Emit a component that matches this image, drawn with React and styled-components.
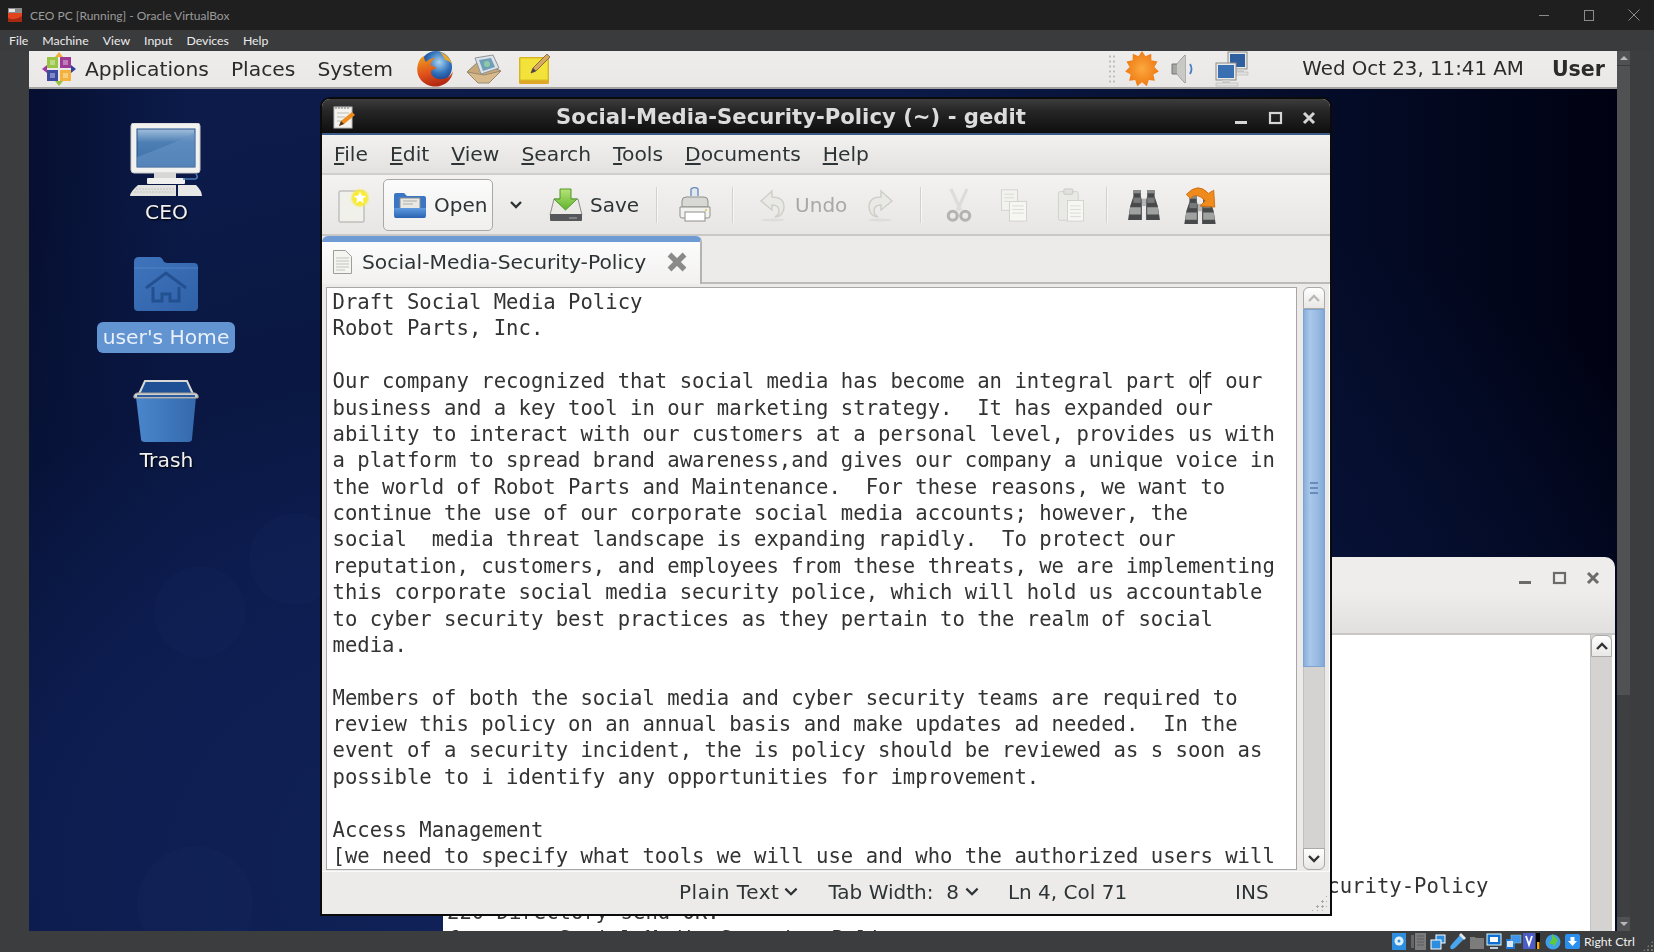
import React from 'react';
import styled, { createGlobalStyle } from 'styled-components';

const Global = createGlobalStyle`
  html, body { margin: 0; padding: 0; background: #3c3d3f; overflow: hidden; }
  * { box-sizing: border-box; }
`;

const ui = `"DejaVu Sans", sans-serif`;
const host = `Lato, "Open Sans", sans-serif`;
const mono = `"DejaVu Sans Mono", monospace`;

const Screen = styled.div`
  width: 1654px; height: 952px; display: flex; flex-direction: column; overflow: hidden;
  background: #3c3d3f;
`;
const HostTitle = styled.div`
  height: 30px; background: #1f1f1f; display: flex; align-items: center; padding-left: 7px;
  font: 12px ${host}; color: #9b9b9b; position: relative;
`;
const HostTitleText = styled.span` margin-left: 7px; `;
const HostControls = styled.div`
  margin-left: auto; display: flex; align-items: center; gap: 31px; padding-right: 13px; color: #8b8b8b;
`;
const HostMenu = styled.div`
  height: 21px; background: #3a3b3d; display: flex; align-items: center; gap: 14px; padding-left: 9px;
  font: 12.3px ${host}; color: #ececec;
`;
const Middle = styled.div` height: 880px; display: flex; `;
const Gutter = styled.div` width: 29px; background: #3c3d3f; flex: none; `;
const Guest = styled.div`
  width: 1588px; flex: none; display: flex; flex-direction: column; filter: blur(0.45px); overflow: hidden;
`;
const HostScroll = styled.div`
  width: 13px; flex: none; display: flex; flex-direction: column; background: #3e3f41;
`;
const HostScrollBtn = styled.div`
  height: 14px; background: #505153; display: flex; align-items: center; justify-content: center; flex: none;
  &::after {
    content: ''; border-left: 4px solid transparent; border-right: 4px solid transparent;
    ${p => p.$down ? 'border-top: 4px solid #b9b9b9;' : 'border-bottom: 4px solid #b9b9b9;'}
  }
`;
const HostThumb = styled.div` height: 630px; background: #505153; border-top: 1px solid #3a3a3a; flex: none; `;
const HostTrack = styled.div` flex: 1; `;
const HostStatus = styled.div`
  height: 21px; background: #3c3d3f; display: flex; align-items: center; justify-content: flex-end;
  font: 12.3px ${host}; color: #f0f0f0; padding-right: 19px; position: relative;
`;
const StatusIcon = styled.span` margin-left: ${p => p.$ml || 0}px; display: flex; `;
const RightCtrl = styled.span` margin-left: 4px; `;
const Panel = styled.div`
  height: 38px; background: linear-gradient(#eeedec, #e9e8e7); border-bottom: 2px solid #a4a3a1;
  display: flex; align-items: center; font: 20.3px ${ui}; color: #2b2b2b; flex: none; padding-bottom: 1px;
`;
const PanelSlot = styled.span`
  margin-left: ${p => p.$ml || 0}px; display: flex; white-space: nowrap;
  ${p => p.$bold && 'font-weight: bold;'}
  ${p => p.$fs && `font-size: ${p.$fs}px;`}
`;
const PanelDots = styled.span`
  margin-left: auto; width: 8px; height: 30px;
  background-image: radial-gradient(circle, #bbb 1px, transparent 1.2px); background-size: 4px 5px;
`;
const Desktop = styled.div`
  flex: 1; position: relative; overflow: hidden;
  background:
    radial-gradient(circle 46px at 266px 470px, rgba(40,60,120,.08), rgba(40,60,120,.08) 98%, transparent),
    radial-gradient(circle 46px at 171px 523px, rgba(40,60,120,.07), rgba(40,60,120,.07) 98%, transparent),
    radial-gradient(circle 58px at 166px 815px, rgba(40,60,120,.08), rgba(40,60,120,.08) 98%, transparent),
    radial-gradient(ellipse 1300px 760px at 38% 92%, #12245c 0%, #0d1d50 45%, rgba(8,20,60,0.6) 70%, rgba(0,3,20,0) 100%),
    linear-gradient(90deg, #060f30 0%, #0c1b4a 10%, #0b1a48 55%, #000212 100%);
`;
const IconColumn = styled.div`
  width: 274px; padding-top: 34px; display: flex; flex-direction: column; align-items: center;
`;
const DeskItem = styled.div`
  height: ${p => p.$h}px; display: flex; flex-direction: column; align-items: center; flex: none;
`;
const DeskLabel = styled.div`
  font: 20.3px/24px ${ui}; color: #f1f1f1; text-shadow: 1px 1px 2px #000; margin-top: ${p => p.$mt || 0}px;
  margin-left: 1px; white-space: nowrap;
`;
const DeskPill = styled(DeskLabel)`
  background: #6394d2; border-radius: 6px; padding: 3px 6px 4px; text-shadow: none; color: #e9f0fa; height: 31px;
  margin-left: 0;
`;

const BackWin = styled.div`
  position: absolute; left: 414px; top: 468px; width: 1172px; height: 420px;
  border-radius: 0 10px 0 0; overflow: hidden; display: flex; flex-direction: column;
`;
const BackHead = styled.div`
  height: 78px; flex: none; background: linear-gradient(#eeedec 45%, #e1e0df); border-bottom: 2px solid #c8c7c5;
  display: flex; justify-content: flex-end; gap: 1px; padding: 11px 6px 0 0;
`;
const WinBtn = styled.span` width: 33px; height: 20px; display: flex; align-items: center; justify-content: center; `;
const BackBody = styled.div` flex: 1; display: flex; background: #fff; padding-right: 3px; `;
const BackText = styled.pre`
  flex: 1; margin: 0; padding: 238px 0 0 4px; font: 20.6px/26.37px ${mono}; color: #333;
`;
const BackScroll = styled.div` width: 22px; background: #d4d3d1; border-left: 1px solid #c4c3c1; flex: none; `;
const ScrollBtn = styled.div`
  height: 22px; background: linear-gradient(#fff, #e8e7e6); border: 1px solid #aaa9a7;
  border-radius: ${p => p.$down ? '0 0 6px 6px' : '6px 6px 0 0'};
  display: flex; align-items: center; justify-content: center; flex: none;
`;

const Gedit = styled.div`
  position: absolute; left: 291px; top: 8px; width: 1012px; height: 819px;
  border: 2px solid #0b0b0b; border-radius: 10px 10px 0 0; background: #ecebea;
  display: flex; flex-direction: column; overflow: hidden;
`;
const GTitle = styled.div`
  height: 36px; flex: none; position: relative; display: flex; align-items: center; justify-content: center;
  background: linear-gradient(#3d3d3d, #262626 35%, #0e0e0e); border-bottom: 2px solid #3a5a88;
  font: bold 21.2px ${ui}; color: #dcdcdc; padding-right: 70px;
`;
const GTitleIcon = styled.span` position: absolute; left: 9px; top: 5px; display: flex; `;
const GTitleBtns = styled.span` position: absolute; right: 5px; top: 9px; display: flex; gap: 1px; `;
const GMenu = styled.div`
  height: 40px; flex: none; display: flex; align-items: center; gap: 22px; padding: 0 0 0 12px;
  background: linear-gradient(#f2f1f0, #e3e2e1); border-bottom: 2px solid #cfcecc;
  font: 20.3px ${ui}; color: #2e3436;
`;
const Toolbar = styled.div`
  height: 61px; flex: none; display: flex; align-items: center;
  background: linear-gradient(#f3f2f1, #e7e6e5); border-bottom: 2px solid #c9c8c6;
  font: 20px ${ui}; color: #2e3436;
`;
const Tool = styled.span`
  margin-left: ${p => p.$ml || 0}px; display: flex; align-items: center; flex: none; white-space: nowrap;
  color: ${p => p.$off ? '#a9a8a6' : 'inherit'};
`;
const ToolSep = styled.span`
  margin-left: ${p => p.$ml}px; width: 2px; height: 36px; background: #d2d1cf; flex: none; border-right: 1px solid #f6f6f6;
`;
const OpenBtn = styled.span`
  margin-left: ${p => p.$ml}px; width: 110px; height: 52px; border: 1px solid #a9a8a6; border-radius: 5px;
  background: linear-gradient(#fbfbfb, #f0efee); display: flex; align-items: center; gap: 7px; padding-left: 9px; flex: none;
`;
const Tabs = styled.div`
  height: 48px; flex: none; display: flex; align-items: flex-end; position: relative;
  border-bottom: 2px solid #bcbbb9;
`;
const Tab = styled.div`
  width: 380px; height: 48px; margin-bottom: -2px; background: linear-gradient(#fcfcfc, #f2f1f0);
  border-top: 6px solid #6f9bd4; border-right: 2px solid #b4b3b1; border-radius: 6px 6px 0 0;
  display: flex; align-items: center; padding: 0 0 2px 10px; font: 20.3px ${ui}; color: #2e3436; position: relative; z-index: 1;
`;
const TabLabel = styled.span` margin-left: 9px; white-space: nowrap; `;
const TabClose = styled.span` margin-left: 19px; display: flex; `;
const EditFrame = styled.div`
  height: 587px; flex: none; display: flex; padding: 3px 2px 1px 4px; border-right: 1px solid #fff;
`;
const TextView = styled.div`
  flex: 1; background: #fff; border: 1px solid #a8a7a5; overflow: hidden; padding: 1px 0 0 5.5px;
`;
const Code = styled.pre`
  margin: 0; font: 20.6px/26.37px ${mono}; color: #333;
`;
const Caret = styled.span`
  display: inline-block; width: 0; height: 24px; border-left: 1px solid #111; margin-right: -1px; vertical-align: -6px;
`;
const VScroll = styled.div`
  width: 22px; margin: 0 2px 0 6px; flex: none; display: flex; flex-direction: column; background: #d4d3d1;
  border-radius: 6px;
`;
const VThumb = styled.div`
  height: 358px; flex: none; background: linear-gradient(90deg, #89aedb, #a9c7ea 30%, #97b9e2 70%, #84a9d8);
  border: 1px solid #7fa3d1; display: flex; align-items: center; justify-content: center; flex-direction: column; gap: 3px;
`;
const Grip = styled.i` display: block; width: 8px; height: 2px; background: #6a8bb5; `;
const VTrack = styled.div` flex: 1; border-left: 1px solid #c2c1bf; border-right: 1px solid #c2c1bf; `;
const StatusBar = styled.div`
  flex: 1; display: flex; align-items: center; font: 20px ${ui}; color: #2e3436; position: relative;
  border-top: 1px solid #fafafa; padding-bottom: 3px;
`;
const StatusItem = styled.span`
  margin-left: ${p => p.$ml}px; display: flex; align-items: center; white-space: nowrap;
  ${p => p.$wide && 'letter-spacing: .55px;'}
`;
const ResizeGrip = styled.span`
  position: absolute; right: 3px; bottom: 3px; width: 17px; height: 17px;
  background-image: radial-gradient(circle, #aaa 1px, transparent 1.2px); background-size: 5px 5px;
  clip-path: polygon(100% 0, 100% 100%, 0 100%);
`;
const HostGrip = styled.span`
  position: absolute; right: 0; bottom: 0; width: 12px; height: 12px;
  background-image: radial-gradient(circle, #777 1px, transparent 1.2px); background-size: 4px 4px;
  clip-path: polygon(100% 0, 100% 100%, 0 100%);
`;

const Chevron = ({ s = 16, c = '#2e3436', w = 2.4, up }) => (
  <svg width={s} height={s} viewBox="0 0 16 16">
    <path d={up ? 'M3 11l5-5 5 5' : 'M3 5l5 5 5-5'} fill="none" stroke={c} strokeWidth={w} />
  </svg>
);
const MinI = ({ c }) => <svg width="16" height="16" viewBox="0 0 16 16"><rect x="2" y="11" width="12" height="3" fill={c} /></svg>;
const MaxI = ({ c }) => <svg width="16" height="16" viewBox="0 0 16 16"><rect x="3" y="3" width="11" height="10" fill="none" stroke={c} strokeWidth="2.2" /></svg>;
const CloseI = ({ c, s = 16, w = 3 }) => <svg width={s} height={s} viewBox="0 0 16 16"><path d="M3 3l10 10M13 3L3 13" stroke={c} strokeWidth={w} /></svg>;

const VBoxIcon = () => (
  <svg width="16" height="16" viewBox="0 0 16 16">
    <rect x="1" y="1" width="14" height="5" fill="#8a8a8a" /><rect x="2" y="2" width="6" height="3" fill="#e8e8e8" /><path d="M1 6h14v5q-6 5-14 1z" fill="#e2451e" /><path d="M1 11q7 3 14-2v6H1z" fill="#a62a12" />
  </svg>
);
const CentOS = () => (
  <svg width="34" height="34" viewBox="0 0 34 34">
    <path d="M17 0l4 5h-8z" fill="#f2a93b" /><path d="M0 17l5-4v8z" fill="#a03a9e" /><path d="M34 17l-5-4v8z" fill="#2e3f9e" /><path d="M17 34l4-5h-8z" fill="#98c23c" />
    <rect x="5" y="5" width="11" height="11" fill="#9ac544" /><rect x="18" y="5" width="11" height="11" fill="#9c3a96" />
    <rect x="5" y="18" width="11" height="11" fill="#3c4aa0" /><rect x="18" y="18" width="11" height="11" fill="#f4b23c" />
    <path d="M8 8h5v5H8zM21 8h5v5h-5zM8 21h5v5H8zM21 21h5v5h-5z" fill="#fff" opacity=".35" />
  </svg>
);
const Firefox = () => (
  <svg width="38" height="38" viewBox="0 0 38 38">
    <defs>
      <radialGradient id="ffb" cx=".6" cy=".35" r=".6"><stop offset="0" stopColor="#a8d4f2" /><stop offset=".6" stopColor="#2f6fb8" /><stop offset="1" stopColor="#1c3f88" /></radialGradient>
      <linearGradient id="ffo" x1="0" y1="0" x2=".3" y2="1"><stop offset="0" stopColor="#f0a020" /><stop offset=".6" stopColor="#e0521a" /><stop offset="1" stopColor="#b32a14" /></linearGradient>
    </defs>
    <circle cx="20" cy="17" r="16" fill="url(#ffb)" />
    <path d="M5 8c-4 5-5 13-2 19 4 8 14 11 21 9 7-2 12-7 13-15-2 5-6 8-11 8-6 1-11-3-11-7 0-2 2-3 5-3 0-2-3-4-5-3-1-3 1-6 5-8-5 0-8 2-10 4C9 11 8 9 8 6 6 7 5 8 5 8z" fill="url(#ffo)" />
    <path d="M24 2c6 2 10 6 12 12-3-3-5-4-7-4-1-3-3-6-5-8z" fill="#e8a830" />
  </svg>
);
const Envelope = () => (
  <svg width="36" height="30" viewBox="0 0 36 30">
    <path d="M1 18L13 7l22 10-12 12z" fill="#c9a878" stroke="#8a8172" />
    <path d="M9 4l18-3 6 13-18 6z" fill="#dde3e8" stroke="#8e9499" />
    <path d="M13 6l12-2 4 9-12 4z" fill="#6fa0b8" /><circle cx="21" cy="10" r="3" fill="#8ec8a8" />
    <path d="M1 18l17 3 17-4-12 12H12z" fill="#d7b98c" stroke="#9a8a70" />
  </svg>
);
const Note = () => (
  <svg width="36" height="34" viewBox="0 0 36 34">
    <rect x="2" y="5" width="30" height="27" rx="1.5" fill="#e0a628" />
    <rect x="3" y="6" width="28" height="22" fill="#f3e23a" stroke="#d4c020" />
    <path d="M14 21l2-5L30 2l3 3-14 14z" fill="#d9a860" stroke="#6d5a3a" strokeWidth=".8" /><path d="M14 21l2-5 3 3z" fill="#444" />
  </svg>
);
const star = (n, R, r, c) => Array.from({ length: n * 2 }, (_, i) => {
  const a = (i * Math.PI) / n - Math.PI / 2; const q = i % 2 ? r : R;
  return `${(c + q * Math.cos(a)).toFixed(1)},${(c + q * Math.sin(a)).toFixed(1)}`;
}).join(' ');
const Burst = () => (
  <svg width="34" height="36" viewBox="0 0 34 34" preserveAspectRatio="none">
    <defs><radialGradient id="bst"><stop offset="0" stopColor="#fba93e" /><stop offset="1" stopColor="#ef7a14" /></radialGradient></defs>
    <polygon points={star(11, 17, 12.5, 17)} fill="url(#bst)" />
  </svg>
);
const Speaker = () => (
  <svg width="26" height="34" viewBox="0 0 26 34">
    <path d="M1 12h5l8-9v28l-8-9H1z" fill="#a6a6a3" stroke="#777" /><path d="M6 12l8-9v28l-8-9z" fill="#c8c8c5" />
    <path d="M19 12q3 5 0 10" fill="none" stroke="#4a7fc4" strokeWidth="1.8" />
  </svg>
);
const Network = () => (
  <svg width="34" height="36" viewBox="0 0 34 36">
    <rect x="13" y="1" width="19" height="17" fill="#e8e8e6" stroke="#8c8c8a" /><rect x="15" y="3" width="15" height="13" fill="#2f5f9f" />
    <rect x="21" y="18" width="8" height="3" fill="#cfcfcd" /><rect x="17" y="21" width="16" height="3" fill="#e2e2e0" stroke="#aaa" strokeWidth=".5" />
    <rect x="1" y="12" width="20" height="17" fill="#e8e8e6" stroke="#8c8c8a" /><rect x="3" y="14" width="16" height="13" fill="#3a6fb2" />
    <rect x="7" y="29" width="8" height="3" fill="#cfcfcd" /><rect x="1" y="32" width="22" height="3" fill="#e2e2e0" stroke="#aaa" strokeWidth=".5" />
  </svg>
);
const GeditIcon = () => (
  <svg width="26" height="26" viewBox="0 0 26 26">
    <rect x="3" y="3" width="18" height="21" fill="#f3f2ec" stroke="#bbb" />
    <path d="M5 2v3M8 2v3M11 2v3M14 2v3M17 2v3" stroke="#888" strokeWidth="1.2" />
    <path d="M6 9h12M6 13h8M6 17h6" stroke="#bbb" />
    <path d="M8 22l2-5 11-9 3 3-11 9z" fill="#ee8c1e" /><path d="M8 22l2-5 3 3z" fill="#4a3a2a" />
  </svg>
);
const NewDoc = () => (
  <svg width="32" height="36" viewBox="0 0 32 36">
    <defs><radialGradient id="nd"><stop offset="0" stopColor="#fff200" /><stop offset=".7" stopColor="#f6ea40" /><stop offset="1" stopColor="#f6ea40" stopOpacity="0" /></radialGradient></defs>
    <rect x="2" y="4" width="25" height="31" rx="1" fill="#f1f1ec" stroke="#a8a8a4" />
    <circle cx="23" cy="11" r="10" fill="url(#nd)" />
    <polygon points={star(5, 6.5, 3, 11).split(' ').map(p => { const [x, y] = p.split(','); return `${+x + 12},${y}`; }).join(' ')} fill="#fff" />
  </svg>
);
const FolderOpen = () => (
  <svg width="34" height="28" viewBox="0 0 34 28">
    <defs><linearGradient id="fo" x1="0" y1="0" x2="0" y2="1"><stop offset="0" stopColor="#5f9be0" /><stop offset="1" stopColor="#2a62b0" /></linearGradient></defs>
    <path d="M1 4q0-2 2-2h8l3 3h17q2 0 2 2v18q0 2-2 2H3q-2 0-2-2z" fill="#3a76c4" />
    <rect x="7" y="7" width="20" height="11" fill="#e8e8e4" stroke="#8b8b88" /><path d="M10 10h14M10 13h10" stroke="#aaa" />
    <path d="M1 17h32l-1 9q0 1-2 1H4q-2 0-2-1z" fill="url(#fo)" />
  </svg>
);
const SaveI = () => (
  <svg width="34" height="34" viewBox="0 0 34 34">
    <defs><linearGradient id="sg" x1="0" y1="0" x2="0" y2="1"><stop offset="0" stopColor="#b9e27a" /><stop offset="1" stopColor="#5fb52c" /></linearGradient></defs>
    <path d="M5 11h24l4 16H1z" fill="#eceae6" stroke="#8c8c88" />
    <rect x="1" y="26" width="32" height="7" rx="1" fill="#55575a" /><path d="M20 30h8" stroke="#aaa" />
    <path d="M11 1h11v10h6L16.500 22 5 11h6z" fill="url(#sg)" stroke="#4f9a25" />
  </svg>
);
const Printer = () => (
  <svg width="34" height="36" viewBox="0 0 34 36">
    <path d="M13 9V2q4-3 7 0v7" fill="#dfe7f1" stroke="#6f8fb8" strokeWidth="1.4" />
    <path d="M4 14q0-4 4-4h18q4 0 4 4v6H4z" fill="#d8d8d4" stroke="#8f8f8c" />
    <path d="M2 20h30v9q0 2-2 2H4q-2 0-2-2z" fill="#f1f1ee" stroke="#8f8f8c" />
    <rect x="7" y="25" width="20" height="9" fill="#fff" stroke="#8f8f8c" /><circle cx="28" cy="23" r="1" fill="#d8c04a" />
  </svg>
);
const ArrowI = ({ flip }) => (
  <svg width="32" height="34" viewBox="0 0 32 34" style={flip ? { transform: 'scaleX(-1)' } : undefined}>
    <path d="M16 3L5 13l11 9v-5c5 0 7 2 7 6 0 3-2 5-4 6 5 0 9-4 9-10 0-7-5-10-12-10z" fill="#e9e9e5" stroke="#cfcfca" strokeWidth="1.5" />
    <ellipse cx="17" cy="32" rx="12" ry="1.500" fill="#ddd" />
  </svg>
);
const Scissors = () => (
  <svg width="30" height="34" viewBox="0 0 32 38">
    <path d="M7 1l11 24M25 1L14 25" stroke="#dcdcd8" strokeWidth="3.500" fill="none" />
    <circle cx="9" cy="31" r="5" fill="none" stroke="#b5b2b0" strokeWidth="3.500" /><circle cx="23" cy="31" r="5" fill="none" stroke="#b5b2b0" strokeWidth="3.500" />
  </svg>
);
const Copy = () => (
  <svg width="30" height="34" viewBox="0 0 32 38">
    <rect x="2" y="2" width="18" height="23" fill="#f2f2ee" stroke="#d0d0cc" /><rect x="11" y="15" width="19" height="22" fill="#f6f6f3" stroke="#d0d0cc" />
    <path d="M5 7h11M5 11h11M5 15h5M14 20h13M14 24h13M14 28h13" stroke="#d8d8d4" />
  </svg>
);
const Paste = () => (
  <svg width="30" height="34" viewBox="0 0 32 38">
    <rect x="2" y="4" width="22" height="32" rx="2" fill="#e9e9e5" stroke="#cfcfca" /><rect x="8" y="1" width="10" height="6" rx="1" fill="#e0e0dc" stroke="#c8c8c4" />
    <rect x="12" y="14" width="18" height="23" fill="#f6f6f3" stroke="#d0d0cc" /><path d="M15 20h12M15 24h12M15 28h12M15 32h12" stroke="#d8d8d4" />
  </svg>
);
const BinoBody = () => (
  <>
    <path d="M6 2h7v6l1 3v19H1l2-13 3-9z" fill="#47494a" />
    <path d="M26 2h-7v6l-1 3v19h13l-2-13-3-9z" fill="#47494a" />
    <rect x="6" y="2" width="7" height="3" fill="#8a8c8b" /><rect x="19" y="2" width="7" height="3" fill="#8a8c8b" />
    <path d="M3 18h10v7H2zM19 18h10l1 7H19z" fill="#a0a2a1" />
    <rect x="6" y="9" width="7" height="5" fill="#77797a" /><rect x="19" y="9" width="7" height="5" fill="#77797a" />
    <rect x="14" y="10" width="4" height="7" fill="#b4b6b5" />
  </>
);
const Find = () => <svg width="34" height="34" viewBox="0 0 32 32"><BinoBody /></svg>;
const Replace = () => (
  <svg width="34" height="38" viewBox="0 0 32 36">
    <g transform="translate(0 7)"><BinoBody /></g>
    <path d="M3 8Q14-4 24 7l5-3 1 16-14-1 5-5Q12 5 7 12z" fill="#ef8a1c" stroke="#c96a10" strokeWidth=".8" />
  </svg>
);
const TabDoc = () => (
  <svg width="21" height="26" viewBox="0 0 21 26">
    <path d="M1.500 1.500h12l6 6v17h-18z" fill="#f4f4f1" stroke="#9d9d9a" /><path d="M4 9h13M4 12h13M4 15h13M4 18h13M4 21h9" stroke="#c2c2be" />
  </svg>
);
const Computer = () => (
  <svg width="72" height="74" viewBox="0 0 72 74">
    <defs>
      <linearGradient id="scr" x1="0" y1="0" x2="0" y2="1"><stop offset="0" stopColor="#a2bfdc" /><stop offset=".35" stopColor="#4d7fb4" /><stop offset="1" stopColor="#3a6fa8" /></linearGradient>
    </defs>
    <rect x="1" y="0" width="69" height="50" rx="3" fill="#f1f1ef" stroke="#c8c8c6" />
    <rect x="7" y="6" width="58" height="38" fill="url(#scr)" stroke="#234f8a" />
    <path d="M7 34Q35 24 65 10v34H7z" fill="#6a96c6" opacity=".55" />
    <rect x="24" y="50" width="22" height="5" fill="#d7d7d5" /><rect x="17" y="55" width="38" height="6" rx="1" fill="#f0f0ee" />
    <path d="M53 56h12q4-1 1-5" fill="none" stroke="#4a79b8" strokeWidth="1.500" />
    <path d="M8 62h38v11H0q0-4 8-11z" fill="#e2e2e0" /><path d="M48 62h18q6 6 6 11H48z" fill="#e8e8e6" />
    <path d="M6 66h38M4 69h40" stroke="#c4c4c2" strokeDasharray="2 1" />
  </svg>
);
const HomeFolder = () => (
  <svg width="64" height="55" viewBox="0 0 64 55">
    <defs><linearGradient id="hf" x1="0" y1="0" x2="1" y2="1"><stop offset="0" stopColor="#3f74bc" /><stop offset="1" stopColor="#2f61a8" /></linearGradient></defs>
    <path d="M0 6q0-5 5-5h20q3 0 5 5l3 1h27q4 0 4 4v40q0 4-4 4H4q-4 0-4-4z" fill="url(#hf)" />
    <path d="M0 12h64" stroke="#5d90d2" strokeWidth="1" opacity=".6" />
    <path d="M12 32l20-15 20 15M19 31v14h9v-7h8v7h9V31" fill="none" stroke="#1f4a8a" strokeWidth="3" opacity=".8" />
  </svg>
);
const Trash = () => (
  <svg width="68" height="64" viewBox="0 0 68 64">
    <defs><linearGradient id="tr" x1="0" y1="0" x2="1" y2="0"><stop offset="0" stopColor="#4a86cc" /><stop offset="1" stopColor="#3469ac" /></linearGradient></defs>
    <path d="M4 18l2-3h56l2 3-4 42q0 3-4 3H13q-4 0-4-3z" fill="url(#tr)" />
    <path d="M7 15L13 2h42l6 13z" fill="#1f4f94" stroke="#d8d8d6" strokeWidth="2" />
    <path d="M2 19q-1-4 3-5h58q4 1 3 5z" fill="#cfcfcd" stroke="#9c9c9a" />
    <path d="M5 17h58" stroke="#2b5c9f" strokeWidth="2" />
  </svg>
);

const Hd = () => <svg width="14" height="17" viewBox="0 0 14 17"><rect width="14" height="17" fill="#2d8ee0" /><circle cx="7" cy="8" r="4.500" fill="#dff0fb" /><circle cx="7" cy="8" r="1.500" fill="#2d8ee0" /></svg>;
const Opt = () => <svg width="16" height="17" viewBox="0 0 16 17"><rect x="5" width="11" height="17" fill="#7b7b7b" /><path d="M1 2h3v13H1z" fill="#666" /><path d="M7 3h7M7 6h7M7 9h7M7 12h7" stroke="#5c5c5c" /></svg>;
const Net = () => <svg width="16" height="16" viewBox="0 0 16 16"><rect x="6" y="1" width="9" height="8" fill="#2d8ee0" stroke="#fff" /><rect x="1" y="6" width="10" height="9" fill="#2d8ee0" stroke="#fff" /></svg>;
const Usb = () => <svg width="17" height="17" viewBox="0 0 17 17"><path d="M11 2l4 4-8 8q-3 3-5 2-2-2 1-5z" fill="#4aa7ee" /><path d="M12 0l5 5-2 2-5-5z" fill="#dfe8f0" /></svg>;
const Shared = () => <svg width="16" height="16" viewBox="0 0 16 16"><path d="M1 3h5l1 1h8v11H1z" fill="#7c7c7c" /></svg>;
const Disp = () => <svg width="16" height="17" viewBox="0 0 16 17"><rect x="1" y="1" width="14" height="11" fill="#0e6fd0" stroke="#dff" /><rect x="4" y="4" width="8" height="5" fill="#fff" /><path d="M4 15h8" stroke="#bcd" strokeWidth="2" /></svg>;
const Multi = () => <svg width="17" height="16" viewBox="0 0 17 16"><rect x="1" y="5" width="9" height="10" fill="#1d77d6" /><rect x="6" y="1" width="10" height="8" fill="#3f93e8" stroke="#9cc" strokeWidth=".5" /><path d="M2 7h6v6H2z" fill="#d8e8f5" /></svg>;
const Vx = () => <svg width="17" height="17" viewBox="0 0 17 17"><rect width="12" height="16" fill="#4a5cc8" /><path d="M3 3l3 9 3-9" fill="none" stroke="#fff" strokeWidth="1.800" /><rect x="13" width="4" height="16" fill="#000" /><rect x="14" y="9" width="2.500" height="7" fill="#f4a50f" /></svg>;
const Globe = () => <svg width="17" height="17" viewBox="0 0 17 17"><circle cx="8" cy="9" r="7.500" fill="#3f9fe8" /><path d="M7 1l6 6-4 7-1-3H4l3-5z" fill="#5fc83c" /></svg>;
const DownBox = () => <svg width="15" height="15" viewBox="0 0 15 15"><rect width="15" height="15" rx="2" fill="#2b8ff0" /><path d="M5.500 3h4v4H12l-4.500 5L3 7h2.500z" fill="#fff" /></svg>;

const menus = [['F', 'ile'], ['E', 'dit'], ['V', 'iew'], ['S', 'earch'], ['T', 'ools'], ['D', 'ocuments'], ['H', 'elp']];
const lines = [
  'Draft Social Media Policy',
  'Robot Parts, Inc.',
  '',
  null,
  'business and a key tool in our marketing strategy.  It has expanded our',
  'ability to interact with our customers at a personal level, provides us with',
  'a platform to spread brand awareness,and gives our company a unique voice in',
  'the world of Robot Parts and Maintenance.  For these reasons, we want to',
  'continue the use of our corporate social media accounts; however, the',
  'social  media threat landscape is expanding rapidly.  To protect our',
  'reputation, customers, and employees from these threats, we are implementing',
  'this corporate social media security police, which will hold us accountable',
  'to cyber security best practices as they pertain to the realm of social',
  'media.',
  '',
  'Members of both the social media and cyber security teams are required to',
  'review this policy on an annual basis and make updates ad needed.  In the',
  'event of a security incident, the is policy should be reviewed as s soon as',
  'possible to i identify any opportunities for improvement.',
  '',
  'Access Management',
  '[we need to specify what tools we will use and who the authorized users will',
];

export default function App() {
  return (
    <Screen>
      <Global />
      <HostTitle>
        <VBoxIcon />
        <HostTitleText>CEO PC [Running] - Oracle VirtualBox</HostTitleText>
        <HostControls>
          <svg width="14" height="14" viewBox="0 0 14 14"><path d="M2 7.500h10" stroke="currentColor" /></svg>
          <svg width="14" height="14" viewBox="0 0 14 14"><rect x="2.500" y="2.500" width="9" height="10" fill="none" stroke="currentColor" /></svg>
          <svg width="14" height="14" viewBox="0 0 14 14"><path d="M1.500 1.500l11 11M12.500 1.500l-11 11" stroke="currentColor" /></svg>
        </HostControls>
      </HostTitle>
      <HostMenu>
        {['File', 'Machine', 'View', 'Input', 'Devices', 'Help'].map(m => <span key={m}>{m}</span>)}
      </HostMenu>
      <Middle>
        <Gutter />
        <Guest>
          <Panel>
            <PanelSlot $ml={13}><CentOS /></PanelSlot>
            <PanelSlot $ml={9}>Applications</PanelSlot>
            <PanelSlot $ml={22}>Places</PanelSlot>
            <PanelSlot $ml={22}>System</PanelSlot>
            <PanelSlot $ml={23}><Firefox /></PanelSlot>
            <PanelSlot $ml={12}><Envelope /></PanelSlot>
            <PanelSlot $ml={15}><Note /></PanelSlot>
            <PanelDots />
            <PanelSlot $ml={9}><Burst /></PanelSlot>
            <PanelSlot $ml={12}><Speaker /></PanelSlot>
            <PanelSlot $ml={18}><Network /></PanelSlot>
            <PanelSlot $ml={53} $fs={19.8}>Wed Oct 23, 11:41 AM</PanelSlot>
            <PanelSlot $ml={28} $bold $fs={20.6}>User</PanelSlot>
            <PanelSlot $ml={12} />
          </Panel>
          <Desktop>
            <IconColumn>
              <DeskItem $h={133}><Computer /><DeskLabel $mt={3}>CEO</DeskLabel></DeskItem>
              <DeskItem $h={123}><HomeFolder /><DeskPill $mt={11}>user's Home</DeskPill></DeskItem>
              <DeskItem $h={100}><Trash /><DeskLabel $mt={5}>Trash</DeskLabel></DeskItem>
            </IconColumn>
            <BackWin>
              <BackHead>
                <WinBtn><MinI c="#6b6b6b" /></WinBtn>
                <WinBtn><MaxI c="#6b6b6b" /></WinBtn>
                <WinBtn><CloseI c="#6b6b6b" /></WinBtn>
              </BackHead>
              <BackBody>
                <BackText>{'local: Social-Media-Security-Policy remote: Social-Media-Security-Policy'.padStart(84)}{'\n'}220 Directory send OK.{'\n'}ftp&gt; put Social Media Security Policy</BackText>
                <BackScroll><ScrollBtn><Chevron c="#333" up /></ScrollBtn></BackScroll>
              </BackBody>
            </BackWin>
            <Gedit>
              <GTitle>
                <GTitleIcon><GeditIcon /></GTitleIcon>
                Social-Media-Security-Policy (~) - gedit
                <GTitleBtns>
                  <WinBtn><MinI c="#d5d5d5" /></WinBtn>
                  <WinBtn><MaxI c="#d5d5d5" /></WinBtn>
                  <WinBtn><CloseI c="#d5d5d5" /></WinBtn>
                </GTitleBtns>
              </GTitle>
              <GMenu>
                {menus.map(([a, b]) => <span key={a}><u>{a}</u>{b}</span>)}
              </GMenu>
              <Toolbar>
                <Tool $ml={15}><NewDoc /></Tool>
                <OpenBtn $ml={14}><FolderOpen /><span>Open</span></OpenBtn>
                <Tool $ml={15}><Chevron /></Tool>
                <Tool $ml={25}><SaveI /></Tool>
                <Tool $ml={7}>Save</Tool>
                <ToolSep $ml={17} />
                <Tool $ml={20}><Printer /></Tool>
                <ToolSep $ml={20} />
                <Tool $ml={22} $off><ArrowI /></Tool>
                <Tool $ml={7} $off>Undo</Tool>
                <Tool $ml={18} $off><ArrowI flip /></Tool>
                <ToolSep $ml={23} />
                <Tool $ml={22}><Scissors /></Tool>
                <Tool $ml={25}><Copy /></Tool>
                <Tool $ml={27}><Paste /></Tool>
                <ToolSep $ml={20} />
                <Tool $ml={19}><Find /></Tool>
                <Tool $ml={22}><Replace /></Tool>
              </Toolbar>
              <Tabs>
                <Tab>
                  <TabDoc />
                  <TabLabel>Social-Media-Security-Policy</TabLabel>
                  <TabClose><CloseI c="#8a8a88" s={24} w={3.6} /></TabClose>
                </Tab>
              </Tabs>
              <EditFrame>
                <TextView>
                  <Code>
                    {lines.map((l, i) => (
                      <React.Fragment key={i}>
                        {l === null
                          ? <>Our company recognized that social media has become an integral part o<Caret />f our</>
                          : l}
                        {'\n'}
                      </React.Fragment>
                    ))}
                  </Code>
                </TextView>
                <VScroll>
                  <ScrollBtn><Chevron c="#b8b8b6" up /></ScrollBtn>
                  <VThumb><Grip /><Grip /><Grip /></VThumb>
                  <VTrack />
                  <ScrollBtn $down><Chevron c="#333" /></ScrollBtn>
                </VScroll>
              </EditFrame>
              <StatusBar>
                <StatusItem $ml={357} $wide>Plain Text</StatusItem>
                <StatusItem $ml={3}><Chevron s={18} w={2} /></StatusItem>
                <StatusItem $ml={28}>Tab Width:&nbsp; 8</StatusItem>
                <StatusItem $ml={4}><Chevron s={18} w={2} /></StatusItem>
                <StatusItem $ml={27}>Ln 4, Col 71</StatusItem>
                <StatusItem $ml={108}>INS</StatusItem>
                <ResizeGrip />
              </StatusBar>
            </Gedit>
          </Desktop>
        </Guest>
        <HostScroll>
          <HostScrollBtn />
          <HostThumb />
          <HostTrack />
          <HostScrollBtn $down />
        </HostScroll>
      </Middle>
      <HostStatus>
        <StatusIcon><Hd /></StatusIcon>
        <StatusIcon $ml={4}><Opt /></StatusIcon>
        <StatusIcon $ml={4}><Net /></StatusIcon>
        <StatusIcon $ml={3}><Usb /></StatusIcon>
        <StatusIcon $ml={3}><Shared /></StatusIcon>
        <StatusIcon $ml={1}><Disp /></StatusIcon>
        <StatusIcon $ml={3}><Multi /></StatusIcon>
        <StatusIcon $ml={1}><Vx /></StatusIcon>
        <StatusIcon $ml={5}><Globe /></StatusIcon>
        <StatusIcon $ml={3}><DownBox /></StatusIcon>
        <RightCtrl>Right Ctrl</RightCtrl>
        <HostGrip />
      </HostStatus>
    </Screen>
  );
}
